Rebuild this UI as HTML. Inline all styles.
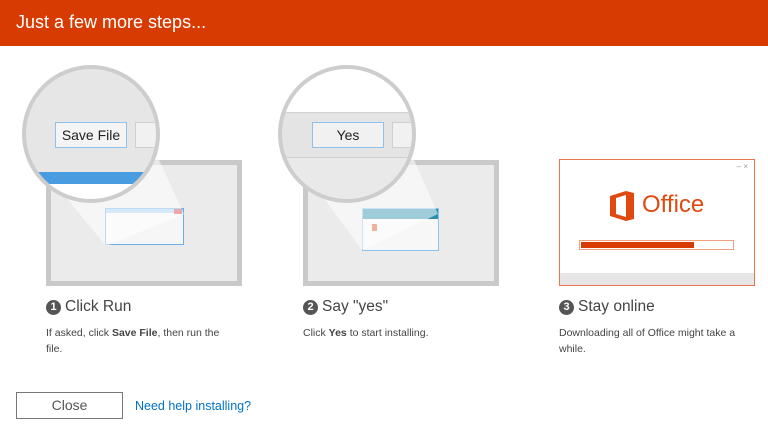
<!DOCTYPE html>
<html><head><style>
*{margin:0;padding:0;box-sizing:border-box}
body{width:768px;height:428px;background:#fff;font-family:"Liberation Sans",sans-serif;position:relative;overflow:hidden}
.a{position:absolute}
.hdr{left:0;top:0;width:768px;height:46px;background:#d83b01;color:#fff;font-size:18px;padding:12px 0 0 16px}
.mon{border:5px solid #c9c9c9;background:#ebebeb}
.circ{border-radius:50%;border:4px solid #cdcdcd;overflow:hidden;background:#e6e6e6}
.btn{border:1px solid #cfcfcf;background:#f1f1f1;font-size:14px;text-align:center;color:#222}
.t{font-size:15.5px;color:#444}
.n{display:inline-block;width:15px;height:15px;border-radius:50%;background:#555;color:#fff;font-size:11px;text-align:center;line-height:15px;vertical-align:1px;margin-right:4px;font-weight:bold}
.d{font-size:10.5px;color:#444;line-height:16px}
</style></head><body>
<div class="a hdr">Just a few more steps...</div>

<div class="a mon" style="left:46px;top:160px;width:196px;height:126px"></div>
<div class="a" style="left:105px;top:208px;width:79px;height:37px;border:1px solid #6aaee8;background:#f6f6f6"><div style="height:4px;background:#a9cdf0"></div><div style="position:absolute;right:1px;top:0;width:8px;height:5px;background:#d04040"></div></div>
<div class="a mon" style="left:303px;top:160px;width:196px;height:126px"></div>
<div class="a" style="left:362px;top:208px;width:77px;height:43px;border:1px solid #8ec2ee;background:#f7f7f7"><div style="height:10px;background:#2a8fa8"></div><div style="position:absolute;left:9px;top:15px;width:5px;height:7px;background:#e05020"></div></div>
<svg class="a" style="left:0;top:0" width="768" height="300">
<polygon points="60,190 145,130 184,214 106,246" fill="#fff" opacity="0.55"/>
<polygon points="318,190 400,128 438,214 362,250" fill="#fff" opacity="0.55"/>
</svg>
<div class="a circ" style="left:22px;top:65px;width:138px;height:138px">
 <div class="a" style="left:0;top:103px;width:138px;height:12px;background:#4a9ce0"></div>
 <div class="a" style="left:0;top:115px;width:138px;height:30px;background:#fff"></div>
 <div class="a btn" style="left:29px;top:53px;width:72px;height:26px;border-color:#8fc1ec;background:#f4f4f4;line-height:24px">Save File</div>
 <div class="a btn" style="left:109px;top:53px;width:40px;height:26px"></div>
</div>
<div class="a circ" style="left:278px;top:65px;width:138px;height:138px;background:#e4e4e4">
 <div class="a" style="left:0;top:0;width:138px;height:44px;background:#fff;border-bottom:1px solid #d0d0d0"></div>
 <div class="a" style="left:0;top:88px;width:138px;height:60px;background:#e9e9e9;border-top:1px solid #d0d0d0"></div>
 <div class="a btn" style="left:30px;top:53px;width:72px;height:26px;border-color:#8fc1ec;line-height:24px">Yes</div>
 <div class="a btn" style="left:110px;top:53px;width:40px;height:26px"></div>
</div>
<div class="a" style="left:559px;top:159px;width:196px;height:127px;border:1px solid #e8764a;background:#fff">
 <div class="a" style="right:6px;top:2px;font-size:8px;color:#999">– ×</div>
 <svg class="a" style="left:48px;top:30px" width="28" height="32" viewBox="0 0 28 32"><path d="M2 6 L18 1 L26 3 L26 29 L18 31 L2 26 Z M8 8 L8 24 L18 27 L18 5 Z" fill="#e04a10" fill-rule="evenodd"/></svg>
 <div class="a" style="left:82px;top:31px;font-size:24px;color:#e04a10">Office</div>
 <div class="a" style="left:19px;top:80px;width:155px;height:10px;border:1px solid #f0a080;padding:1px"><div style="width:75%;height:100%;background:#d83b01"></div></div>
 <div class="a" style="left:0;bottom:0;width:194px;height:12px;background:#e6e6e6"></div>
</div>

<div class="a t" style="left:46px;top:298px"><span class="n">1</span>Click Run</div>
<div class="a d" style="left:46px;top:325px;width:185px">If asked, click <b>Save File</b>, then run the file.</div>
<div class="a t" style="left:303px;top:298px"><span class="n">2</span>Say "yes"</div>
<div class="a d" style="left:303px;top:325px">Click <b>Yes</b> to start installing.</div>
<div class="a t" style="left:559px;top:298px"><span class="n">3</span>Stay online</div>
<div class="a d" style="left:559px;top:325px;width:200px">Downloading all of Office might take a while.</div>

<div class="a" style="left:16px;top:392px;width:107px;height:27px;border:1px solid #777;font-size:14px;color:#555;text-align:center;line-height:25px">Close</div>
<div class="a" style="left:135px;top:399px;font-size:12.5px;color:#0072c6">Need help installing?</div>
</body></html>
